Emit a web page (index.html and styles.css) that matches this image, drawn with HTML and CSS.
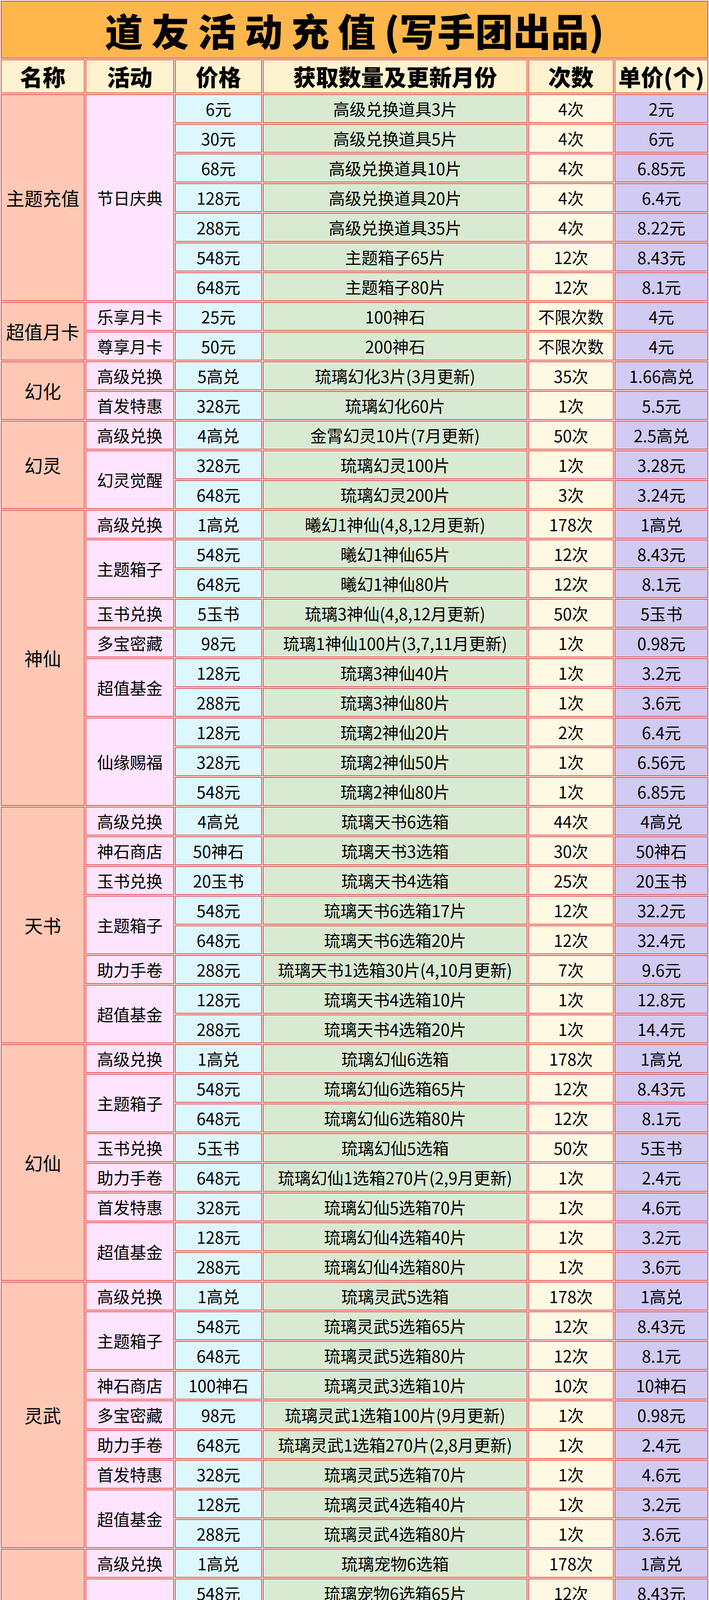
FILE: index.html
```html
<!DOCTYPE html>
<html lang="zh-CN">
<head>
<meta charset="utf-8">
<title>道友活动充值</title>
<link rel="stylesheet" href="styles.css">
</head>
<body>
<table class="sheet">
<colgroup>
<col class="w1"><col class="w2"><col class="w3"><col class="w4"><col class="w5"><col class="w6">
</colgroup>
<thead>
<tr class="title-row"><th colspan="6" class="title">道 友 活 动 充 值 (写手团出品)</th></tr>
<tr class="head-row"><th>名称</th><th>活动</th><th>价格</th><th>获取数量及更新月份</th><th>次数</th><th>单价(个)</th></tr>
</thead>
<tbody>
<tr><td class="c1" rowspan="7">主题充值</td><td class="c2" rowspan="7">节日庆典</td><td class="c3">6元</td><td class="c4">高级兑换道具3片</td><td class="c5">4次</td><td class="c6">2元</td></tr>
<tr><td class="c3">30元</td><td class="c4">高级兑换道具5片</td><td class="c5">4次</td><td class="c6">6元</td></tr>
<tr><td class="c3">68元</td><td class="c4">高级兑换道具10片</td><td class="c5">4次</td><td class="c6">6.85元</td></tr>
<tr><td class="c3">128元</td><td class="c4">高级兑换道具20片</td><td class="c5">4次</td><td class="c6">6.4元</td></tr>
<tr><td class="c3">288元</td><td class="c4">高级兑换道具35片</td><td class="c5">4次</td><td class="c6">8.22元</td></tr>
<tr><td class="c3">548元</td><td class="c4">主题箱子65片</td><td class="c5">12次</td><td class="c6">8.43元</td></tr>
<tr><td class="c3">648元</td><td class="c4">主题箱子80片</td><td class="c5">12次</td><td class="c6">8.1元</td></tr>

<tr><td class="c1" rowspan="2">超值月卡</td><td class="c2">乐享月卡</td><td class="c3">25元</td><td class="c4">100神石</td><td class="c5">不限次数</td><td class="c6">4元</td></tr>
<tr><td class="c2">尊享月卡</td><td class="c3">50元</td><td class="c4">200神石</td><td class="c5">不限次数</td><td class="c6">4元</td></tr>

<tr><td class="c1" rowspan="2">幻化</td><td class="c2">高级兑换</td><td class="c3">5高兑</td><td class="c4">琉璃幻化3片(3月更新)</td><td class="c5">35次</td><td class="c6">1.66高兑</td></tr>
<tr><td class="c2">首发特惠</td><td class="c3">328元</td><td class="c4">琉璃幻化60片</td><td class="c5">1次</td><td class="c6">5.5元</td></tr>

<tr><td class="c1" rowspan="3">幻灵</td><td class="c2">高级兑换</td><td class="c3">4高兑</td><td class="c4">金霄幻灵10片(7月更新)</td><td class="c5">50次</td><td class="c6">2.5高兑</td></tr>
<tr><td class="c2" rowspan="2">幻灵觉醒</td><td class="c3">328元</td><td class="c4">琉璃幻灵100片</td><td class="c5">1次</td><td class="c6">3.28元</td></tr>
<tr><td class="c3">648元</td><td class="c4">琉璃幻灵200片</td><td class="c5">3次</td><td class="c6">3.24元</td></tr>

<tr><td class="c1" rowspan="10">神仙</td><td class="c2">高级兑换</td><td class="c3">1高兑</td><td class="c4">曦幻1神仙(4,8,12月更新)</td><td class="c5">178次</td><td class="c6">1高兑</td></tr>
<tr><td class="c2" rowspan="2">主题箱子</td><td class="c3">548元</td><td class="c4">曦幻1神仙65片</td><td class="c5">12次</td><td class="c6">8.43元</td></tr>
<tr><td class="c3">648元</td><td class="c4">曦幻1神仙80片</td><td class="c5">12次</td><td class="c6">8.1元</td></tr>
<tr><td class="c2">玉书兑换</td><td class="c3">5玉书</td><td class="c4">琉璃3神仙(4,8,12月更新)</td><td class="c5">50次</td><td class="c6">5玉书</td></tr>
<tr><td class="c2">多宝密藏</td><td class="c3">98元</td><td class="c4">琉璃1神仙100片(3,7,11月更新)</td><td class="c5">1次</td><td class="c6">0.98元</td></tr>
<tr><td class="c2" rowspan="2">超值基金</td><td class="c3">128元</td><td class="c4">琉璃3神仙40片</td><td class="c5">1次</td><td class="c6">3.2元</td></tr>
<tr><td class="c3">288元</td><td class="c4">琉璃3神仙80片</td><td class="c5">1次</td><td class="c6">3.6元</td></tr>
<tr><td class="c2" rowspan="3">仙缘赐福</td><td class="c3">128元</td><td class="c4">琉璃2神仙20片</td><td class="c5">2次</td><td class="c6">6.4元</td></tr>
<tr><td class="c3">328元</td><td class="c4">琉璃2神仙50片</td><td class="c5">1次</td><td class="c6">6.56元</td></tr>
<tr><td class="c3">548元</td><td class="c4">琉璃2神仙80片</td><td class="c5">1次</td><td class="c6">6.85元</td></tr>

<tr><td class="c1" rowspan="8">天书</td><td class="c2">高级兑换</td><td class="c3">4高兑</td><td class="c4">琉璃天书6选箱</td><td class="c5">44次</td><td class="c6">4高兑</td></tr>
<tr><td class="c2">神石商店</td><td class="c3">50神石</td><td class="c4">琉璃天书3选箱</td><td class="c5">30次</td><td class="c6">50神石</td></tr>
<tr><td class="c2">玉书兑换</td><td class="c3">20玉书</td><td class="c4">琉璃天书4选箱</td><td class="c5">25次</td><td class="c6">20玉书</td></tr>
<tr><td class="c2" rowspan="2">主题箱子</td><td class="c3">548元</td><td class="c4">琉璃天书6选箱17片</td><td class="c5">12次</td><td class="c6">32.2元</td></tr>
<tr><td class="c3">648元</td><td class="c4">琉璃天书6选箱20片</td><td class="c5">12次</td><td class="c6">32.4元</td></tr>
<tr><td class="c2">助力手卷</td><td class="c3">288元</td><td class="c4">琉璃天书1选箱30片(4,10月更新)</td><td class="c5">7次</td><td class="c6">9.6元</td></tr>
<tr><td class="c2" rowspan="2">超值基金</td><td class="c3">128元</td><td class="c4">琉璃天书4选箱10片</td><td class="c5">1次</td><td class="c6">12.8元</td></tr>
<tr><td class="c3">288元</td><td class="c4">琉璃天书4选箱20片</td><td class="c5">1次</td><td class="c6">14.4元</td></tr>

<tr><td class="c1" rowspan="8">幻仙</td><td class="c2">高级兑换</td><td class="c3">1高兑</td><td class="c4">琉璃幻仙6选箱</td><td class="c5">178次</td><td class="c6">1高兑</td></tr>
<tr><td class="c2" rowspan="2">主题箱子</td><td class="c3">548元</td><td class="c4">琉璃幻仙6选箱65片</td><td class="c5">12次</td><td class="c6">8.43元</td></tr>
<tr><td class="c3">648元</td><td class="c4">琉璃幻仙6选箱80片</td><td class="c5">12次</td><td class="c6">8.1元</td></tr>
<tr><td class="c2">玉书兑换</td><td class="c3">5玉书</td><td class="c4">琉璃幻仙5选箱</td><td class="c5">50次</td><td class="c6">5玉书</td></tr>
<tr><td class="c2">助力手卷</td><td class="c3">648元</td><td class="c4">琉璃幻仙1选箱270片(2,9月更新)</td><td class="c5">1次</td><td class="c6">2.4元</td></tr>
<tr><td class="c2">首发特惠</td><td class="c3">328元</td><td class="c4">琉璃幻仙5选箱70片</td><td class="c5">1次</td><td class="c6">4.6元</td></tr>
<tr><td class="c2" rowspan="2">超值基金</td><td class="c3">128元</td><td class="c4">琉璃幻仙4选箱40片</td><td class="c5">1次</td><td class="c6">3.2元</td></tr>
<tr><td class="c3">288元</td><td class="c4">琉璃幻仙4选箱80片</td><td class="c5">1次</td><td class="c6">3.6元</td></tr>

<tr><td class="c1" rowspan="9">灵武</td><td class="c2">高级兑换</td><td class="c3">1高兑</td><td class="c4">琉璃灵武5选箱</td><td class="c5">178次</td><td class="c6">1高兑</td></tr>
<tr><td class="c2" rowspan="2">主题箱子</td><td class="c3">548元</td><td class="c4">琉璃灵武5选箱65片</td><td class="c5">12次</td><td class="c6">8.43元</td></tr>
<tr><td class="c3">648元</td><td class="c4">琉璃灵武5选箱80片</td><td class="c5">12次</td><td class="c6">8.1元</td></tr>
<tr><td class="c2">神石商店</td><td class="c3">100神石</td><td class="c4">琉璃灵武3选箱10片</td><td class="c5">10次</td><td class="c6">10神石</td></tr>
<tr><td class="c2">多宝密藏</td><td class="c3">98元</td><td class="c4">琉璃灵武1选箱100片(9月更新)</td><td class="c5">1次</td><td class="c6">0.98元</td></tr>
<tr><td class="c2">助力手卷</td><td class="c3">648元</td><td class="c4">琉璃灵武1选箱270片(2,8月更新)</td><td class="c5">1次</td><td class="c6">2.4元</td></tr>
<tr><td class="c2">首发特惠</td><td class="c3">328元</td><td class="c4">琉璃灵武5选箱70片</td><td class="c5">1次</td><td class="c6">4.6元</td></tr>
<tr><td class="c2" rowspan="2">超值基金</td><td class="c3">128元</td><td class="c4">琉璃灵武4选箱40片</td><td class="c5">1次</td><td class="c6">3.2元</td></tr>
<tr><td class="c3">288元</td><td class="c4">琉璃灵武4选箱80片</td><td class="c5">1次</td><td class="c6">3.6元</td></tr>

<tr><td class="c1" rowspan="11">宠物</td><td class="c2">高级兑换</td><td class="c3">1高兑</td><td class="c4">琉璃宠物6选箱</td><td class="c5">178次</td><td class="c6">1高兑</td></tr>
<tr><td class="c2" rowspan="2">主题箱子</td><td class="c3">548元</td><td class="c4">琉璃宠物6选箱65片</td><td class="c5">12次</td><td class="c6">8.43元</td></tr>
<tr><td class="c3">648元</td><td class="c4">琉璃宠物6选箱80片</td><td class="c5">12次</td><td class="c6">8.1元</td></tr>
<tr><td class="c2">首发特惠</td><td class="c3">328元</td><td class="c4">琉璃宠物6选箱70片</td><td class="c5">1次</td><td class="c6">4.6元</td></tr>
<tr><td class="c2" rowspan="2">超值基金</td><td class="c3">128元</td><td class="c4">琉璃宠物5选箱40片</td><td class="c5">1次</td><td class="c6">3.2元</td></tr>
<tr><td class="c3">288元</td><td class="c4">琉璃宠物5选箱80片</td><td class="c5">1次</td><td class="c6">3.6元</td></tr>
<tr><td class="c2">神石商店</td><td class="c3">100神石</td><td class="c4">琉璃宠物5选箱10片</td><td class="c5">10次</td><td class="c6">10神石</td></tr>
<tr><td class="c2">助力手卷</td><td class="c3">648元</td><td class="c4">琉璃宠物1选270片(2,8月更新)</td><td class="c5">1次</td><td class="c6">2.4元</td></tr>
<tr><td class="c2" rowspan="3">仙缘秘宝</td><td class="c3">98元</td><td class="c4">琉璃宠物3选箱20片</td><td class="c5">1次</td><td class="c6">4.9元</td></tr>
<tr><td class="c3">288元</td><td class="c4">琉璃宠物3选箱70片</td><td class="c5">1次</td><td class="c6">4.11元</td></tr>
<tr><td class="c3">328元</td><td class="c4">琉璃宠物3选箱80片</td><td class="c5">1次</td><td class="c6">4.1元</td></tr>

<tr><td class="c1" rowspan="7">元神</td><td class="c2">高级兑换</td><td class="c3">1高兑</td><td class="c4">曦幻元神</td><td class="c5">178次</td><td class="c6">1高兑</td></tr>
<tr><td class="c2" rowspan="2">主题箱子</td><td class="c3">548元</td><td class="c4">曦幻元神65片</td><td class="c5">12次</td><td class="c6">8.43元</td></tr>
<tr><td class="c3">648元</td><td class="c4">曦幻元神80片</td><td class="c5">12次</td><td class="c6">8.1元</td></tr>
<tr><td class="c2" rowspan="3">仙缘赐福</td><td class="c3">98元</td><td class="c4">琉璃元神20片(3月更新)</td><td class="c5">1次</td><td class="c6">4.9元</td></tr>
<tr><td class="c3">288元</td><td class="c4">琉璃元神70片</td><td class="c5">1次</td><td class="c6">4.11元</td></tr>
<tr><td class="c3">328元</td><td class="c4">琉璃元神80片</td><td class="c5">1次</td><td class="c6">4.1元</td></tr>
<tr><td class="c2">助力手卷</td><td class="c3">648元</td><td class="c4">琉璃元神270片(8月更新)</td><td class="c5">1次</td><td class="c6">2.4元</td></tr>
</tbody>
</table>
</body>
</html>
```
FILE: styles.css
```css
html, body {
  margin: 0;
  padding: 0;
  background: #ffffff;
}

body {
  font-family: "Noto Sans CJK SC", "Noto Sans", sans-serif;
  color: #000;
}

.sheet {
  width: 1816px;
  table-layout: fixed;
  border-collapse: separate;
  border-spacing: 2px;
  background: #ffffff;
}

.w1 { width: 215px; }
.w2 { width: 227px; }
.w3 { width: 223px; }
.w4 { width: 678px; }
.w5 { width: 219px; }
.w6 { width: 240px; }

.sheet th,
.sheet td {
  box-sizing: border-box;
  border: 2px solid #e2403a;
  padding: 0;
  text-align: center;
  vertical-align: middle;
  white-space: nowrap;
}

.title {
  height: 148px;
  background: #ffb74d;
  font-size: 97px;
  font-weight: 900;
  line-height: 1.3;
  white-space: pre;
}

.head-row th {
  height: 87px;
  background: #fff2cf;
  font-size: 58px;
  font-weight: 900;
  line-height: 1.3;
}

.sheet td {
  height: 74px;
  font-size: 42px;
  font-weight: 400;
  line-height: 1.35;
}

.sheet td.c1 {
  background: #ffc8b5;
  font-size: 47px;
}
.c2 { background: #ffe4ff; }
.c3 { background: #ddf7ff; }
.c4 { background: #d9ead3; }
.c5 { background: #fff9e4; }
.c6 { background: #d1caf3; }
```
